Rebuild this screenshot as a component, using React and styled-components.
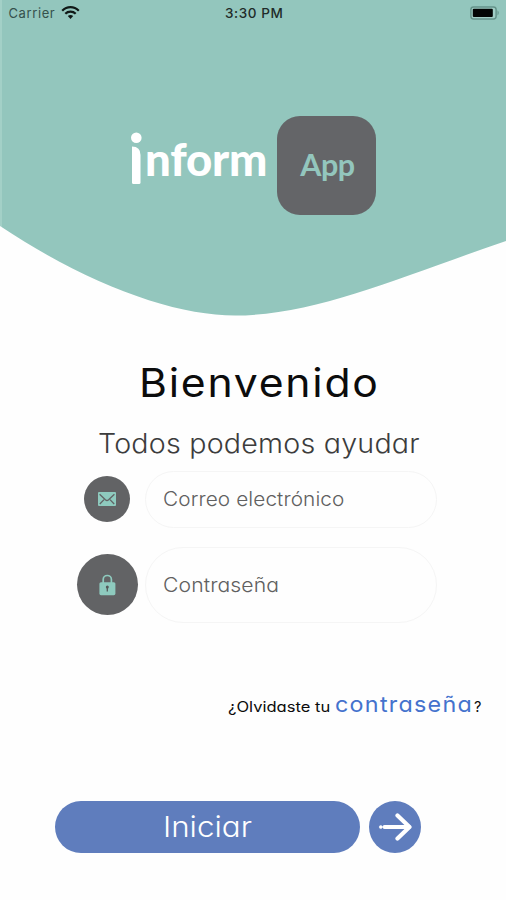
import React from "react";
import styled, { createGlobalStyle } from "styled-components";

const GlobalStyle = createGlobalStyle`
  *, *::before, *::after { box-sizing: border-box; }
  body { margin: 0; background: #fefefe; }
`;

const Screen = styled.main`
  display: flex;
  flex-direction: column;
  width: 506px;
  height: 900px;
  overflow: hidden;
  background: #fefefe;
  color: #0c0c0c;
  font-family: Inter, "Noto Sans", sans-serif;
  font-feature-settings: "cv11", "calt" 0;
  white-space: nowrap;
`;

const Wide = styled.span`
  display: inline-block;
  transform: scaleX(${({ $by }) => $by});
  transform-origin: ${({ $from }) => $from || "left"} center;
`;

const Header = styled.header`
  flex: none;
  height: 316px;
  background: linear-gradient(90deg, #a3d0c7 2px, #93c6bd 2px);
  clip-path: path("M0 226 C90 286 175 315.5 235 315.5 C315 315.5 400 277 506 241 V0 H0 Z");
`;

const StatusBar = styled.div`
  display: grid;
  grid-template-columns: 1fr auto 1fr;
  align-items: center;
  height: 26px;
  padding: 0 6px 0 8.5px;
  font-size: 13px;
  line-height: 26px;
  color: #1f2b29;
`;

const Carrier = styled.div`
  display: flex;
  align-items: center;
  gap: 5.5px;
  letter-spacing: 0.6px;
  color: #35514c;
  font-feature-settings: normal;
`;

const Clock = styled.div`
  font-size: 13.5px;
  font-weight: 500;
  letter-spacing: 0.6px;
`;

const BatteryIcon = styled.svg`
  justify-self: end;
`;

const Brand = styled.div`
  display: flex;
  align-items: flex-start;
  padding: 90px 0 0 131px;
  font-family: Lato, sans-serif;
  font-feature-settings: normal;
`;

const StemMark = styled.svg`
  flex: none;
  margin: 16px 3px 0 0;
`;

const BrandName = styled.div`
  width: 132px;
  margin-top: 16px;
  font-size: 45.5px;
  font-weight: 900;
  line-height: 54px;
  letter-spacing: -0.2px;
  color: #fff;
`;

const BrandTile = styled.div`
  display: flex;
  align-items: center;
  justify-content: center;
  width: 99px;
  height: 99px;
  padding: 0 0 3px 2px;
  border-radius: 23px;
  background: #646568;
  color: #93c6bd;
  font-size: 30.5px;
  font-weight: 700;
  line-height: 40px;
  letter-spacing: -0.5px;
`;

const Title = styled.h1`
  margin: 42px 0 0 139px;
  font-size: 39px;
  font-weight: 400;
  line-height: 50px;
  letter-spacing: 1.6px;
`;

const Subtitle = styled.p`
  margin: 18px 0 0 98px;
  font-size: 26.5px;
  font-weight: 300;
  line-height: 34px;
  letter-spacing: 0.2px;
  color: #3c3c3c;
`;

const Form = styled.div`
  display: flex;
  flex-direction: column;
  gap: 19px;
  margin-top: 10.5px;
`;

const FieldRow = styled.div`
  display: grid;
  grid-template-columns: 75px 292px;
  align-items: center;
  margin-left: 69.5px;
  height: ${({ $height }) => $height}px;
`;

const IconDisc = styled.div`
  display: flex;
  align-items: center;
  justify-content: center;
  justify-self: center;
  width: ${({ $size }) => $size}px;
  height: ${({ $size }) => $size}px;
  border-radius: 50%;
  background: #626365;
`;

const Field = styled.div`
  display: flex;
  align-items: center;
  height: 100%;
  padding-left: 17.5px;
  border: 1px solid #f5f5f5;
  border-radius: 38px;
  font-size: 19.5px;
  font-weight: 300;
  letter-spacing: 0.1px;
  color: #606060;
`;

const Forgot = styled.div`
  display: grid;
  grid-template-columns: 106.5px 139.5px auto;
  align-items: baseline;
  margin: 65.5px 0 0 228px;
  height: 32px;
  font-size: 14.5px;
  line-height: 32px;
`;

const ForgotLink = styled.a`
  font-size: 22px;
  letter-spacing: 1.2px;
  color: #4472cd;
`;

const Actions = styled.div`
  display: flex;
  gap: 9px;
  margin: 80.5px 0 0 55px;
`;

const StartButton = styled.button`
  width: 305px;
  height: 52px;
  padding: 0;
  border: 0;
  border-radius: 26px;
  background: #5f7dbd;
  color: #fff;
  font: 300 28.5px/52px Inter, sans-serif;
  font-feature-settings: inherit;
`;

const NextButton = styled.button`
  display: flex;
  align-items: center;
  justify-content: center;
  width: 52px;
  height: 52px;
  padding: 0;
  border: 0;
  border-radius: 50%;
  background: #5f7dbd;
`;

const Wifi = () => (
  <svg width="19" height="14" viewBox="0 0 19 14" fill="none" stroke="#101917" strokeWidth="2.2">
    <path d="M1.2 4.7C6 -0.1 13 -0.1 17.8 4.7" />
    <path d="M4.3 7.8C7.2 4.9 11.8 4.9 14.7 7.8" />
    <path d="M6.8 10.1C8.4 8.5 10.6 8.5 12.2 10.1L9.5 12.9Z" fill="#101917" stroke="none" />
  </svg>
);

const Battery = () => (
  <BatteryIcon width="30" height="14" viewBox="0 0 30 14">
    <rect x="0.9" y="0.9" width="25.2" height="12" rx="2.6" fill="#a1cec6" stroke="#64938a" strokeWidth="1.5" />
    <rect x="2.8" y="2.7" width="20" height="8.4" rx="1" fill="#030505" />
    <path d="M27.5 4.3Q30 6.9 27.5 9.5Z" fill="#64938a" />
  </BatteryIcon>
);

const Envelope = () => (
  <svg width="18" height="14" viewBox="0 0 18 14">
    <rect width="18" height="14" rx="1" fill="#8ecabe" />
    <path d="M1.6 2.2L7.4 7.8Q9 9.2 10.6 7.8L16.4 2.2M1.8 12L6 7.6M16.2 12L12 7.6" fill="none" stroke="#626365" strokeWidth="1.3" />
  </svg>
);

const Padlock = () => (
  <svg width="17" height="22" viewBox="0 0 17 22">
    <path d="M4.2 9V5.6a4.1 4.1 0 0 1 8.2 0V9" fill="none" stroke="#8ecabe" strokeWidth="1.7" />
    <rect x="0.4" y="8.2" width="16" height="13" rx="1.6" fill="#8ecabe" />
    <circle cx="8.3" cy="13" r="1.5" fill="#55595a" />
    <path d="M8.3 13v4.4" stroke="#55595a" strokeWidth="1.3" />
  </svg>
);

const Arrow = () => (
  <svg width="34" height="28" viewBox="0 0 34 28" fill="none" stroke="#fff" strokeLinecap="round" strokeLinejoin="round">
    <path d="M6.5 14H31" strokeWidth="3.8" />
    <path d="M19.5 2.5L31.5 14L19.5 25.5" strokeWidth="4.2" />
    <circle cx="2.8" cy="14" r="1.5" fill="#fff" strokeWidth="0.6" />
  </svg>
);

export default function App() {
  return (
    <>
      <GlobalStyle />
      <Screen>
        <Header>
          <StatusBar>
            <Carrier>
              Carrier
              <Wifi />
            </Carrier>
            <Clock>3:30 PM</Clock>
            <Battery />
          </StatusBar>
          <Brand>
            <StemMark width="11" height="53" viewBox="0 0 11 53" fill="#fff">
              <circle cx="5.3" cy="5.8" r="5.3" />
              <path d="M1 14.5Q9.5 14.5 9.5 23V50.5Q9.5 52 8 52H2.5Q1 52 1 50.5Z" />
            </StemMark>
            <BrandName>nform</BrandName>
            <BrandTile>App</BrandTile>
          </Brand>
        </Header>
        <Title><Wide $by={1.095}>Bienvenido</Wide></Title>
        <Subtitle><Wide $by={1.08}>Todos podemos ayudar</Wide></Subtitle>
        <Form>
          <FieldRow $height={57}>
            <IconDisc $size={46}><Envelope /></IconDisc>
            <Field><Wide $by={1.065}>Correo electrónico</Wide></Field>
          </FieldRow>
          <FieldRow $height={76}>
            <IconDisc $size={61}><Padlock /></IconDisc>
            <Field><Wide $by={1.085}>Contraseña</Wide></Field>
          </FieldRow>
        </Form>
        <Forgot>
          <span><Wide $by={1.14}>¿Olvidaste tu</Wide></span>
          <ForgotLink><Wide $by={1.06}>contraseña</Wide></ForgotLink>
          <span>?</span>
        </Forgot>
        <Actions>
          <StartButton><Wide $by={1.1} $from="center">Iniciar</Wide></StartButton>
          <NextButton aria-label="Continuar"><Arrow /></NextButton>
        </Actions>
      </Screen>
    </>
  );
}
